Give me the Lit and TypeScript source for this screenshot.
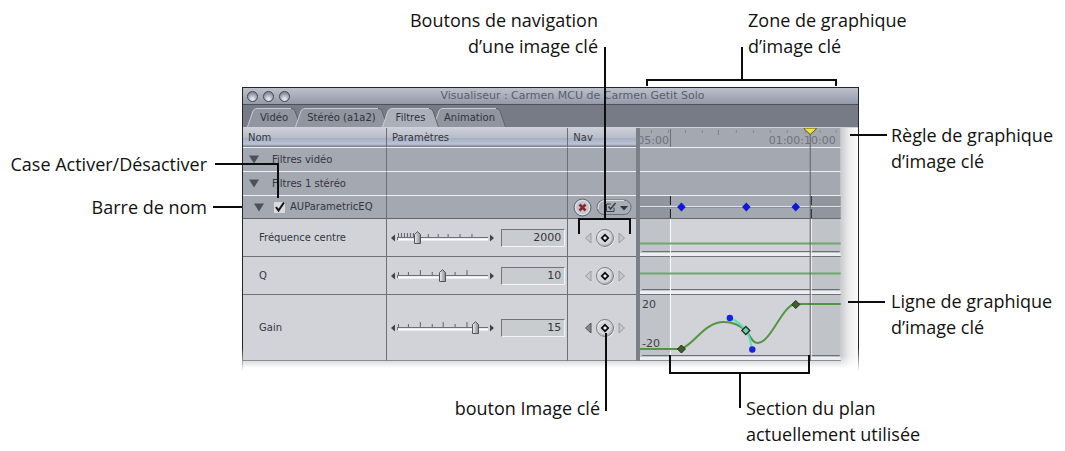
import { LitElement, html, svg, css } from "lit";
import { customElement, property, state } from "lit/decorators.js";
import { classMap } from "lit/directives/class-map.js";

interface Tab { id: string; label: string; width: number; }
interface Param { name: string; value: string; percent: number; ticks: [number, number][]; previous: boolean; tall: boolean; }

const TABS: Tab[] = [
  { id: "video", label: "Vidéo", width: 54 },
  { id: "stereo", label: "Stéréo (a1a2)", width: 93 },
  { id: "filters", label: "Filtres", width: 57 },
  { id: "motion", label: "Animation", width: 73 },
];

// Tick pairs hold the position on the track and the tick height.
const LOG_TICKS: [number, number][] = [[1, 4], [4, 4], [7, 4], [10, 4], [13, 4], [16, 4], [31, 3], [41, 3], [51, 3], [63, 3], [75, 3]];
const EVEN_TICKS: [number, number][] = [[1, 3], [11, 3], [23, 5], [35, 3], [46, 5], [58, 3], [70, 5]];

const PARAMS: Param[] = [
  { name: "Fréquence centre", value: "2000", percent: 20, ticks: LOG_TICKS, previous: false, tall: false },
  { name: "Q", value: "10", percent: 50, ticks: EVEN_TICKS, previous: false, tall: false },
  { name: "Gain", value: "15", percent: 90, ticks: EVEN_TICKS, previous: true, tall: true },
];

@customElement("param-slider")
export class ParamSlider extends LitElement {
  @property() label = "";
  @property({ type: Number }) value = 0;
  @property({ attribute: false }) ticks: [number, number][] = [];

  static styles = css`
    :host { display: flex; align-items: center; gap: 2px; flex: 1; min-width: 0; }
    .rail { position: relative; flex: 1; height: 14px; min-width: 0; }
    .marks { display: block; width: 100%; height: 14px; }
    .range { position: absolute; inset: 0; width: 100%; height: 14px; margin: 0; appearance: none; background: none; }
    .range::-webkit-slider-thumb {
      appearance: none; width: 9px; height: 13px; border: 0;
      background: url("data:image/svg+xml,%3Csvg xmlns='http://www.w3.org/2000/svg' width='9' height='13'%3E%3Cdefs%3E%3ClinearGradient id='g'%3E%3Cstop stop-color='%23f2f3f4'/%3E%3Cstop offset='1' stop-color='%2385888d'/%3E%3C/linearGradient%3E%3C/defs%3E%3Cpath d='M1.5 12.5V3.5L4.5.7L7.5 3.5V12.5Z' fill='url(%23g)' stroke='%23505359'/%3E%3C/svg%3E") no-repeat;
    }
    .step { display: flex; padding: 0; border: 0; background: none; }
  `;

  render() {
    return html`
      <button class="step" aria-label="Diminuer ${this.label}">
        <svg width="4" height="8"><path d="M4 0.5V7.5L0 4Z" fill="#3f434a" /></svg>
      </button>
      <div class="rail">
        <svg class="marks" viewBox="0 0 92 14" preserveAspectRatio="none">
          <path d="M0 6.5H92" stroke="#6a6e75" />
          <path d="M1 8.5H92" stroke="#fff" stroke-width="2" />
          <path d="M0.5 6V9" stroke="#6a6e75" />
          ${this.ticks.map(([x, h]) => svg`<path d="M${x + 0.5} 6V${6 - h}" stroke="#5c6067" />`)}
        </svg>
        <input class="range" type="range" min="0" max="100" .value=${String(this.value)} aria-label=${this.label} />
      </div>
      <button class="step" aria-label="Augmenter ${this.label}">
        <svg width="4" height="8"><path d="M0 0.5V7.5L4 4Z" fill="#3f434a" /></svg>
      </button>
    `;
  }
}

@customElement("keyframe-nav")
export class KeyframeNav extends LitElement {
  @property({ type: Boolean }) previous = false;

  static styles = css`
    :host { display: flex; align-items: center; justify-content: center; gap: 3px; padding-left: 6px; }
    .key { display: flex; padding: 0; border: 0; background: none; }
  `;

  render() {
    return html`
      <button class="key" aria-label="Image clé précédente">
        <svg width="8" height="12"><path d="M7 1V11L1.5 6Z" fill=${this.previous ? "#84888e" : "#c3c6cb"} stroke=${this.previous ? "#50545b" : "#999da4"} /></svg>
      </button>
      <button class="key" aria-label="Image clé">
        <svg width="20" height="20" viewBox="0 0 20 20">
          <defs><linearGradient id="k" x1="0" y1="0" x2="1" y2="1"><stop stop-color="#fff" /><stop offset="1" stop-color="#9a9da3" /></linearGradient></defs>
          <circle cx="10.5" cy="10.5" r="9" fill="#f7f8f9" />
          <circle cx="10" cy="10" r="8.5" fill="url(#k)" stroke="#777b82" />
          <circle cx="10" cy="10" r="6.5" fill="#d5d7dc" />
          <path d="M10 6.8L13.2 10L10 13.2L6.8 10Z" fill="#f0f1f3" stroke="#08090b" stroke-width="1.7" />
        </svg>
      </button>
      <button class="key" aria-label="Image clé suivante">
        <svg width="8" height="12"><path d="M1 1V11L6.5 6Z" fill="#c3c6cb" stroke="#999da4" /></svg>
      </button>
    `;
  }
}

@customElement("keyframe-graph")
export class KeyframeGraph extends LitElement {
  static styles = css`
    :host { display: block; min-width: 0; }
    .graph { display: block; width: 100%; height: 233px; }
    .time { font: 11px "DejaVu Sans", sans-serif; fill: #6e727c; }
    .scale { font: 11px "DejaVu Sans", sans-serif; fill: #3d4046; }
  `;

  private row(top: number, bottom: number, last = false) {
    return svg`
      <rect x="0" y=${top} width="201" height=${bottom - top} fill="#d1d3d9" />
      <rect x="0" y=${top} width="30" height=${bottom - top} fill="#c0c3c8" />
      <rect x="171" y=${top} width="30" height=${bottom - top} fill="#c0c3c8" />
      <path d="M0 ${bottom - 2.5}H201" stroke="#eceef1" stroke-width="3" />
      <path d="M2 ${bottom - 5.5}H200" stroke="#696d74" />
      <path d="M0 ${bottom - 0.5}H201" stroke=${last ? "#8b8e95" : "#6d7178"} />
    `;
  }

  render() {
    const keys: number[] = [41.5, 106.5, 156];
    const marks: number[] = [11, 28, 45, 62, 96, 113, 130, 147, 165, 180, 196];
    return html`
      <svg class="graph" viewBox="0 0 201 233" preserveAspectRatio="none" role="img" aria-label="Zone de graphique d’image clé">
        <rect width="201" height="91" fill="#a4a8b1" />
        ${marks.map((x) => svg`<rect x=${x} y="2" width="1" height="3" fill="#858994" />`)}
        <rect x="78" y="2" width="1" height="5" fill="#7d818b" />
        <text class="time" x="29" y="16" text-anchor="end">05:00</text>
        <text class="time" x="196" y="16" text-anchor="end">01:00:10:00</text>
        <rect x="30" y="1" width="1" height="18" fill="#6a6e78" />
        <path d="M0 19.5H201M0 43.5H201M0 67.5H201" stroke="#eef0f3" />
        <rect y="68" width="30" height="22" fill="#91959e" />
        <rect x="171" y="68" width="30" height="22" fill="#91959e" />
        <path d="M0 78.5H201" stroke="#dfe1e6" />
        <path d="M0 79.5H201" stroke="#8b8f99" />
        <path d="M30.5 68V77M30.5 81V90M171.5 68V77M171.5 81V90" stroke="#15171b" />
        ${keys.map((x) => svg`<path d="M${x} 74.5L${x + 4.3} 79L${x} 83.5L${x - 4.3} 79Z" fill="#1018d8" />`)}
        <path d="M0 90.5H201" stroke="#62666f" />
        ${this.row(91, 129)}
        ${this.row(129, 167)}
        ${this.row(167, 233, true)}
        <path d="M30.5 91V229M171.5 91V229" stroke="#fff" />
        <path d="M0 115.5H201M0 145.5H201" stroke="#6fa768" stroke-width="2" />
        <text class="scale" x="2" y="180">20</text>
        <text class="scale" x="2" y="219">-20</text>
        <path d="M0 221H41C54 217 64 194 84 194C94 194 100 197 106 203C112 209 112 215 118 215C131 215 143 176 156 176H201" fill="none" stroke="#52963f" stroke-width="2" />
        <path d="M90 190C98 193 103 198 106 203C110 207 111 214 112 221" fill="none" stroke="#5bdcc0" stroke-width="2" />
        <path d="M41.5 217L45.5 221L41.5 225L37.5 221Z" fill="#405c31" stroke="#1d2b16" />
        <path d="M156 172.5L160 176.5L156 180.5L152 176.5Z" fill="#405c31" stroke="#1d2b16" />
        <path d="M106 198.5L110 202.5L106 206.5L102 202.5Z" fill="#7ccdb0" stroke="#20352a" stroke-width="1.4" />
        <circle cx="90" cy="190" r="3.2" fill="#1a22e0" />
        <circle cx="112.5" cy="221.5" r="3.2" fill="#1a22e0" />
        <rect x="170" y="4" width="1" height="229" fill="#5d616a" />
        <path d="M164.5 0H176.5V1L170.5 6.5L164.5 1Z" fill="#f1e240" stroke="#5c561c" />
      </svg>
    `;
  }
}

@customElement("app-root")
export class AppRoot extends LitElement {
  @state() private tab = "filters";

  static styles = css`
    :host { display: block; background: #fff; color: #111; font-family: "Open Sans", "Noto Sans", sans-serif; }
    .figure { position: relative; margin: 0; font-size: 18px; line-height: 26px; }
    .top, .middle, .bottom { display: grid; }
    .top { grid-template-columns: 598fr 150fr 317fr; padding: 7px 0 28px; }
    .middle { grid-template-columns: minmax(0, 242fr) minmax(0, 617fr) minmax(0, 206fr); }
    .bottom { grid-template-columns: 600fr 146fr 319fr; padding: 25px 0 4px; }
    .label { margin: 0; white-space: nowrap; }
    .end { text-align: right; }
    .third { grid-column: 3; }
    .left { display: flex; flex-direction: column; align-items: flex-end; gap: 17px; padding: 64px 35px 0 0; }
    .right { display: flex; flex-direction: column; gap: 114px; padding: 35px 0 0 32px; }
    .lines { position: absolute; inset: 0; width: 100%; height: 100%; pointer-events: none; }
    .stroke { fill: none; stroke: #0c0c0c; stroke-width: 2px; vector-effect: non-scaling-stroke; }

    .window { border: solid 1px; border-bottom: 0; border-image: linear-gradient(#23252c 0 92%, transparent) 1; font: 10px/14px "DejaVu Sans", sans-serif; color: #33363d; padding-bottom: 2px; }
    .title-bar { display: grid; grid-template-columns: 96px 1fr 52px; align-items: center; height: 16px; border-bottom: 1px solid #4d5059; background: linear-gradient(#bcc0ca, #949aab); }
    .lights { display: flex; gap: 5px; padding-left: 4px; }
    .light { width: 11px; height: 11px; padding: 0; border: 1px solid #43464e; border-radius: 50%; background: radial-gradient(circle at 50% 80%, #f2f4f8, #a2a6b0 55%, #70747e); }
    .title { margin: 0; font: 11px/16px "DejaVu Sans", sans-serif; color: #5b5f6c; text-align: center; white-space: nowrap; }
    .tabs { display: flex; align-items: flex-end; height: 22px; padding-left: 4px; background: #777b85; border-bottom: 1px solid #cfd2da; }
    .tab { position: relative; height: 19px; padding: 0; margin-right: -6px; border: 0; background: none; color: #2f3239; font: 10px/19px "DejaVu Sans", sans-serif; white-space: nowrap; }
    .tab.active { z-index: 1; }
    .shape { position: absolute; inset: 0; }
    .tab-text { position: relative; }

    .body { display: grid; grid-template-columns: minmax(0, 398fr) minmax(0, 201fr) minmax(0, 17fr); align-items: start; background: linear-gradient(#dcdde0, #fff) bottom / 100% 7px no-repeat; }
    .params { width: 100%; table-layout: fixed; border-collapse: separate; border-spacing: 0; border-right: 4px solid #7b7f87; }
    .c-name { width: 144px; }
    .c-nav { width: 68px; }
    .params th, .params td { box-sizing: border-box; padding: 0; text-align: left; font-weight: normal; vertical-align: middle; border-right: 1px solid #6b6f78; white-space: nowrap; }
    .params th:last-child, .params td:last-child { border-right: 0; }
    .params .head th { height: 19px; padding-left: 5px; background: linear-gradient(#cdd0d9, #b9bdc8 50%, #a7b0c2 55%, #bbc4d6 85%, #6f737e); }
    .group th, .group td { height: 24px; background: #a4a8b1; border-top: 1px solid #eef0f3; }
    .group.bar th, .group.bar td { border-bottom: 1px solid #62666f; }
    .param th, .param td { height: 38px; background: #d1d3d9; border-bottom: 1px solid #6d7178; }
    .param.tall th, .param.tall td { height: 66px; border-bottom-color: #8b8e95; }
    .params .param th { padding-left: 16px; }
    .name { display: flex; align-items: center; padding-left: 6px; }
    .bar .name { padding-left: 11px; }
    .disclosure { display: flex; padding: 0; margin-right: 13px; border: 0; background: none; }
    .bar .disclosure { margin-right: 10px; }
    .enable { display: flex; align-items: center; gap: 5px; }
    .check { appearance: none; width: 11px; height: 11px; margin: 0; background: #d9dbe0; }
    .check:checked { background: #d9dbe0 url("data:image/svg+xml,%3Csvg xmlns='http://www.w3.org/2000/svg' width='11' height='11'%3E%3Cpath d='M2 5L4.5 8.5L10 0.5' fill='none' stroke='%23101114' stroke-width='2'/%3E%3C/svg%3E"); }
    .control { display: flex; align-items: center; gap: 7px; padding: 0 2px 0 4px; }
    .value { box-sizing: border-box; width: 64px; height: 18px; padding: 0 3px; border: 1px solid; border-color: #70747b #f3f4f6 #f3f4f6 #70747b; border-radius: 0; background: #c9cccf; color: #33363d; font: 11px "DejaVu Sans", sans-serif; text-align: right; }
    .actions { display: flex; align-items: center; gap: 4px; padding-left: 5px; }
    .action { display: flex; padding: 0; border: 0; background: none; }
    .edge { height: 240px; background: linear-gradient(transparent 228px, #fff), linear-gradient(to right, #cbccd0, #eeeeef 50%, #fbfbfc); }
  `;

  private renderTab(t: Tab) {
    const w = t.width;
    const on = t.id === this.tab;
    return html`
      <button class=${classMap({ tab: true, active: on })} role="tab" aria-selected=${on ? "true" : "false"} style="width:${w}px" @click=${() => { this.tab = t.id; }}>
        <svg class="shape" width=${w} height="19">
          <path d="M0 19L6 3Q7 0.5 10 0.5H${w - 10}Q${w - 7} 0.5 ${w - 6} 3L${w} 19Z" fill=${on ? "#acb0bb" : "#9195a0"} />
          <path d="M0.5 19L6 3Q7 0.5 10 0.5H${w - 10}" fill="none" stroke="#c9ccd4" />
          <path d="M${w - 10} 0.5Q${w - 7} 0.5 ${w - 6} 3L${w - 0.5} 19" fill="none" stroke="#5d616b" />
        </svg>
        <span class="tab-text">${t.label}</span>
      </button>
    `;
  }

  private triangle() {
    return html`<svg width="10" height="9"><path d="M0 0.5H10L5 8.5Z" fill="#4c5058" /></svg>`;
  }

  private renderGroup(name: string) {
    return html`
      <tr class="group">
        <th scope="row"><div class="name"><button class="disclosure" aria-label="Replier ${name}">${this.triangle()}</button>${name}</div></th>
        <td></td><td></td>
      </tr>
    `;
  }

  private renderParam(p: Param) {
    return html`
      <tr class=${classMap({ param: true, tall: p.tall })}>
        <th scope="row">${p.name}</th>
        <td>
          <div class="control">
            <param-slider .label=${p.name} .value=${p.percent} .ticks=${p.ticks}></param-slider>
            <input class="value" type="text" .value=${p.value} aria-label=${p.name} />
          </div>
        </td>
        <td><keyframe-nav ?previous=${p.previous}></keyframe-nav></td>
      </tr>
    `;
  }

  private renderWindow() {
    return html`
      <section class="window">
        <header class="title-bar">
          <div class="lights">
            <button class="light" aria-label="Fermer"></button>
            <button class="light" aria-label="Réduire"></button>
            <button class="light" aria-label="Agrandir"></button>
          </div>
          <h1 class="title">Visualiseur : Carmen MCU de Carmen Getit Solo</h1>
        </header>
        <div class="tabs" role="tablist">${TABS.map((t) => this.renderTab(t))}</div>
        <div class="body">
          <table class="params">
            <colgroup><col class="c-name" /><col /><col class="c-nav" /></colgroup>
            <thead><tr class="head"><th>Nom</th><th>Paramètres</th><th>Nav</th></tr></thead>
            <tbody>
              ${this.renderGroup("Filtres vidéo")}
              ${this.renderGroup("Filtres 1 stéréo")}
              <tr class="group bar">
                <th scope="row">
                  <div class="name">
                    <button class="disclosure" aria-label="Replier AUParametricEQ">${this.triangle()}</button>
                    <label class="enable"><input class="check" type="checkbox" checked />AUParametricEQ</label>
                  </div>
                </th>
                <td></td>
                <td>
                  <div class="actions">
                    <button class="action" aria-label="Réinitialiser">
                      <svg width="19" height="19"><circle cx="9.5" cy="9.5" r="8.5" fill="#c3c6ce" stroke="#5f636d" /><circle cx="9.5" cy="9.5" r="7" fill="none" stroke="#e6e8ec" /><path d="M6.5 6.5L12.5 12.5M12.5 6.5L6.5 12.5" stroke="#8a2630" stroke-width="2.6" /></svg>
                    </button>
                    <button class="action" aria-label="Menu des images clés">
                      <svg width="36" height="17"><rect x="1" y="1" width="34" height="14.5" rx="7" fill="#a9adb6" stroke="#686c76" /><path d="M8 1.5H28" stroke="#dfe1e6" /><path d="M2 10Q2 2 9 1.5" fill="none" stroke="#e8eaee" /><path d="M18 8.5V12.5H10.5V5H15" fill="none" stroke="#3b3f47" /><path d="M12.5 7.5L14.5 10L19.5 4" fill="none" stroke="#3b3f47" stroke-width="1.5" /><path d="M24 7H32L28 11.5Z" fill="#33363d" /></svg>
                    </button>
                  </div>
                </td>
              </tr>
              ${PARAMS.map((p) => this.renderParam(p))}
            </tbody>
          </table>
          <keyframe-graph></keyframe-graph>
          <div class="edge"></div>
        </div>
      </section>
    `;
  }

  render() {
    return html`
      <figure class="figure">
        <div class="top">
          <p class="label end">Boutons de navigation<br />d’une image clé</p>
          <p class="label third">Zone de graphique<br />d’image clé</p>
        </div>
        <div class="middle">
          <div class="left">
            <p class="label">Case Activer/Désactiver</p>
            <p class="label">Barre de nom</p>
          </div>
          ${this.renderWindow()}
          <div class="right">
            <p class="label">Règle de graphique<br />d’image clé</p>
            <p class="label">Ligne de graphique<br />d’image clé</p>
          </div>
        </div>
        <div class="bottom">
          <p class="label end">bouton Image clé</p>
          <p class="label third">Section du plan<br />actuellement utilisée</p>
        </div>
        <svg class="lines" viewBox="0 0 1065 451" preserveAspectRatio="none" aria-hidden="true">
          <path class="stroke" d="M605 47V219M579 234V219H630V234" />
          <path class="stroke" d="M742 47V79M647 86V80H836V86" />
          <path class="stroke" d="M215 164H278V198" />
          <path class="stroke" d="M213 207H242" />
          <path class="stroke" d="M850 135H887" />
          <path class="stroke" d="M848 302H885" />
          <path class="stroke" d="M606 333V411" />
          <path class="stroke" d="M670 355V373H809V355M740 373V408" />
        </svg>
      </figure>
    `;
  }
}
